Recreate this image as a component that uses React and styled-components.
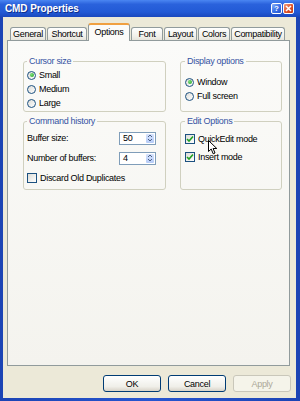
import React from 'react'
import styled, {createGlobalStyle} from 'styled-components'

const GlobalStyle = createGlobalStyle`
  html, body {
    margin: 0;
    padding: 0;
    width: 300px;
    height: 401px;
    overflow: hidden;
  }

  body {
    font-family: "Liberation Sans", Arial, sans-serif;
    font-size: 9px;
    letter-spacing: -0.3px;
    color: #000;
  }
`

const Window = styled.div`
  width: 300px;
  height: 401px;
  display: flex;
  flex-direction: column;
  background: linear-gradient(90deg, #1c44b4 0%, #2656d0 50%, #1c44b4 100%);
  box-sizing: border-box;
`

const TitleBar = styled.div`
  height: 17px;
  display: flex;
  align-items: center;
  justify-content: space-between;
  padding: 0 6px 0 5px;
  background: linear-gradient(#4a86f2 0%, #2a62dc 25%, #225ad6 70%, #1a48bd 100%);
`

const Title = styled.span`
  color: #fff;
  font-weight: bold;
  font-size: 10px;
  letter-spacing: -0.1px;
  text-shadow: 1px 1px 0 #0f2f8c;
`

const Controls = styled.div`
  display: flex;
  gap: 1px;
`

const CtrlButton = styled.div`
  width: 11px;
  height: 11px;
  box-sizing: border-box;
  border: 1px solid #fff;
  border-radius: 2px;
  display: flex;
  align-items: center;
  justify-content: center;
  color: #fff;
  font-weight: bold;
  font-size: 8px;
  letter-spacing: 0;
  background: ${p => p.$close
    ? 'linear-gradient(135deg, #f0a283 0%, #e0562f 50%, #c23c17 100%)'
    : 'linear-gradient(135deg, #8fb3f7 0%, #3c72e8 50%, #2456cf 100%)'};
`

const Frame = styled.div`
  flex: 1;
  margin: 0 4px 3px 3px;
  padding: 6px 6px 6px 4px;
  background: #ece9d8;
  display: flex;
  flex-direction: column;
  min-height: 0;
`

const TabStrip = styled.div`
  height: 18px;
  display: flex;
  align-items: flex-end;
  gap: 1px;
  padding-left: 3px;
  margin-bottom: -1px;
  position: relative;
  z-index: 1;
`

const Tab = styled.div`
  width: ${p => p.$w}px;
  height: ${p => p.$active ? 18 : 13}px;
  margin-bottom: ${p => p.$active ? 0 : 1}px;
  box-sizing: border-box;
  border: 1px solid #919b9c;
  border-bottom: none;
  border-top: ${p => p.$active ? '2px solid #f0a040' : '1px solid #919b9c'};
  border-radius: 3px 3px 0 0;
  background: ${p => p.$active ? '#fbfbf9' : 'linear-gradient(#ffffff, #f1f0ea 70%, #e6e4db)'};
  display: flex;
  align-items: center;
  justify-content: center;
  padding-bottom: ${p => p.$active ? 2 : 0}px;
`

const Panel = styled.div`
  flex: 1;
  border: 1px solid #919b9c;
  background: linear-gradient(#fbfbf9, #f4f3ee);
  padding: 14px 7px 0 15px;
`

const GroupGrid = styled.div`
  display: grid;
  grid-template-columns: 143px 102px;
  column-gap: 14px;
  row-gap: 3px;
`

const Group = styled.fieldset`
  margin: 0;
  min-width: 0;
  border: 1px solid #d0d0bf;
  border-radius: 3px;
  padding: ${p => p.$top}px 4px 1px ${p => p.$left}px;
`

const Legend = styled.legend`
  padding: 0 2px;
  line-height: 12px;
  color: #3553a3;
`

const Row = styled.div`
  height: ${p => p.$h}px;
  display: flex;
  align-items: center;
  gap: 3px;
  position: relative;
`

const SpinRow = styled.div`
  height: 20px;
  display: flex;
  align-items: center;
  justify-content: space-between;
  padding-right: 5px;
`

const Radio = styled.span`
  width: 9px;
  height: 9px;
  box-sizing: border-box;
  border: 1px solid #1c5180;
  border-radius: 50%;
  background: linear-gradient(135deg, #dcdcd7, #ffffff);
  display: flex;
  align-items: center;
  justify-content: center;

  &::after {
    content: '';
    display: ${p => p.$on ? 'block' : 'none'};
    width: 4px;
    height: 4px;
    border-radius: 50%;
    background: radial-gradient(circle at 35% 35%, #7be07b, #21a121);
  }
`

const Box = styled.span`
  width: 10px;
  height: 10px;
  box-sizing: border-box;
  border: 1px solid #1c5180;
  background: linear-gradient(135deg, #dcdcd7, #ffffff);
  display: flex;
  align-items: center;
  justify-content: center;
`

const Spinner = styled.div`
  width: 37px;
  height: 13px;
  box-sizing: border-box;
  border: 1px solid #7f9db9;
  background: #fff;
  display: flex;
  align-items: center;
`

const SpinValue = styled.span`
  flex: 1;
  padding-left: 3px;
`

const SpinButton = styled.div`
  width: 10px;
  height: 11px;
  box-sizing: border-box;
  border: 1px solid #fff;
  border-radius: 2px;
  background: linear-gradient(#d6e3fd, #b5cbf7);
  display: flex;
  align-items: center;
  justify-content: center;
`

const Pointer = styled.svg`
  position: absolute;
  left: 23px;
  top: 10px;
`

const ButtonRow = styled.div`
  height: 17px;
  margin: 9px -1px 0 0;
  display: flex;
  justify-content: flex-end;
  gap: 7px;
`

const Button = styled.div`
  width: 58px;
  height: 17px;
  box-sizing: border-box;
  border: 1px solid ${p => p.$disabled ? '#c9c7ba' : '#003c74'};
  border-radius: 3px;
  background: ${p => p.$disabled ? '#f5f4ea' : 'linear-gradient(#ffffff, #f0efe9 70%, #d8d3c8)'};
  color: ${p => p.$disabled ? '#aca899' : '#000'};
  display: flex;
  align-items: center;
  justify-content: center;
`

const tabs = [
    {label: 'General', w: 36},
    {label: 'Shortcut', w: 40},
    {label: 'Options', w: 42, active: true},
    {label: 'Font', w: 32},
    {label: 'Layout', w: 33},
    {label: 'Colors', w: 32},
    {label: 'Compatibility', w: 54},
]

const Check = () => (
    <svg width="8" height="8" viewBox="0 0 8 8">
        <path d="M1 4 L3 6 L7 1.5" fill="none" stroke="#21a121" strokeWidth="1.6"/>
    </svg>
)

const Spin = ({value}) => (
    <Spinner>
        <SpinValue>{value}</SpinValue>
        <SpinButton>
            <svg width="6" height="8" viewBox="0 0 6 8">
                <path d="M1 3 L3 1 L5 3 M1 5 L3 7 L5 5" fill="none" stroke="#4d6185" strokeWidth="1"/>
            </svg>
        </SpinButton>
    </Spinner>
)

const App = () => {
    return (
        <>
            <GlobalStyle/>
            <Window>
                <TitleBar>
                    <Title>CMD Properties</Title>
                    <Controls>
                        <CtrlButton>?</CtrlButton>
                        <CtrlButton $close>
                            <svg width="7" height="7" viewBox="0 0 7 7">
                                <path d="M1 1 L6 6 M6 1 L1 6" stroke="#fff" strokeWidth="1.5"/>
                            </svg>
                        </CtrlButton>
                    </Controls>
                </TitleBar>

                <Frame>
                    <TabStrip>
                        {tabs.map(t => (
                            <Tab key={t.label} $w={t.w} $active={t.active}>{t.label}</Tab>
                        ))}
                    </TabStrip>

                    <Panel>
                        <GroupGrid>
                            <Group $top={1} $left={3}>
                                <Legend>Cursor size</Legend>
                                <Row $h={14}><Radio $on/>Small</Row>
                                <Row $h={14}><Radio/>Medium</Row>
                                <Row $h={14}><Radio/>Large</Row>
                            </Group>

                            <Group $top={8} $left={4}>
                                <Legend>Display options</Legend>
                                <Row $h={14}><Radio $on/>Window</Row>
                                <Row $h={14}><Radio/>Full screen</Row>
                            </Group>

                            <Group $top={1} $left={3}>
                                <Legend>Command history</Legend>
                                <SpinRow>Buffer size:<Spin value="50"/></SpinRow>
                                <SpinRow>Number of buffers:<Spin value="4"/></SpinRow>
                                <Row $h={20}><Box/>Discard Old Duplicates</Row>
                            </Group>

                            <Group $top={3} $left={4}>
                                <Legend>Edit Options</Legend>
                                <Row $h={18}>
                                    <Box><Check/></Box>QuickEdit mode
                                    <Pointer width="10" height="15" viewBox="0 0 10 15">
                                        <path d="M0.5 0.5 L0.5 11.5 L3.2 9 L5.2 13.8 L7 13 L5.1 8.5 L8.8 8.5 Z"
                                              fill="#fff" stroke="#000" strokeWidth="1" strokeLinejoin="round"/>
                                    </Pointer>
                                </Row>
                                <Row $h={18}><Box><Check/></Box>Insert mode</Row>
                            </Group>
                        </GroupGrid>
                    </Panel>

                    <ButtonRow>
                        <Button>OK</Button>
                        <Button>Cancel</Button>
                        <Button $disabled>Apply</Button>
                    </ButtonRow>
                </Frame>
            </Window>
        </>
    )
}

export default App
